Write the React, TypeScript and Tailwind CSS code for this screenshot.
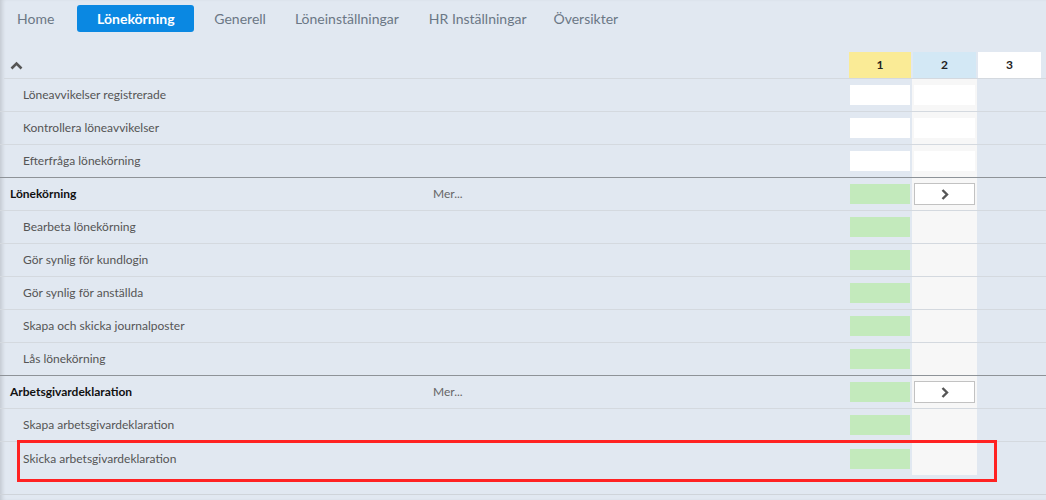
import React from "react";

type Row = {
  label: string;
  kind: "sub" | "section";
  col1: "white" | "green";
  col2: "white" | "button" | "none";
  dark?: boolean;
};

const rows: Row[] = [
  { label: "Löneavvikelser registrerade", kind: "sub", col1: "white", col2: "white" },
  { label: "Kontrollera löneavvikelser", kind: "sub", col1: "white", col2: "white" },
  { label: "Efterfråga lönekörning", kind: "sub", col1: "white", col2: "white", dark: true },
  { label: "Lönekörning", kind: "section", col1: "green", col2: "button" },
  { label: "Bearbeta lönekörning", kind: "sub", col1: "green", col2: "none" },
  { label: "Gör synlig för kundlogin", kind: "sub", col1: "green", col2: "none" },
  { label: "Gör synlig för anställda", kind: "sub", col1: "green", col2: "none" },
  { label: "Skapa och skicka journalposter", kind: "sub", col1: "green", col2: "none" },
  { label: "Lås lönekörning", kind: "sub", col1: "green", col2: "none", dark: true },
  { label: "Arbetsgivardeklaration", kind: "section", col1: "green", col2: "button" },
  { label: "Skapa arbetsgivardeklaration", kind: "sub", col1: "green", col2: "none" },
  { label: "Skicka arbetsgivardeklaration", kind: "sub", col1: "green", col2: "none" },
];

const ChevronRight = () => (
  <svg width="8" height="11" viewBox="0 0 8 11" fill="none">
    <polyline points="1.5,1 6,5.5 1.5,10" stroke="#555" strokeWidth="2.4" />
  </svg>
);

export default function App() {
  return (
    <div
      className="relative w-[1046px] h-[500px] overflow-hidden bg-[#e1e8f1] text-[13px] shadow-[inset_4px_0_4px_-2px_rgba(0,0,0,0.14)]"
      style={{ fontFamily: "Lato, 'Open Sans', sans-serif" }}
    >
      {/* tabs */}
      <div className="flex items-center h-[27px] mt-[5px] pl-[17px] text-[14px] text-[#6b7785]">
        <div className="mr-[23px]">Home</div>
        <div className="h-[27px] w-[117px] mr-[20px] flex items-center justify-center rounded-[3px] bg-[#0a88e2] text-white font-bold">
          Lönekörning
        </div>
        <div className="mr-[29px]">Generell</div>
        <div className="mr-[30px]">Löneinställningar</div>
        <div className="mr-[27px]">HR Inställningar</div>
        <div>Översikter</div>
      </div>

      {/* header */}
      <div className="flex h-[27px] mt-[20px] ml-[4px] border-b border-[#d4d9df]">
        <div className="w-[845px] flex items-center pl-[6px]">
          <svg width="13" height="9" viewBox="0 0 13 9" fill="none">
            <polyline points="1.5,7.5 6.5,2.5 11.5,7.5" stroke="#555" strokeWidth="2.6" />
          </svg>
        </div>
        <div className="w-[62px] h-[26px] bg-[#faeb96] flex items-center justify-center text-[12px] font-bold text-[#222]">1</div>
        <div className="w-[63px] h-[26px] ml-[2px] bg-[#d3e8f5] flex items-center justify-center text-[12px] font-bold text-[#222]">2</div>
        <div className="w-[63px] h-[26px] ml-[2px] bg-white flex items-center justify-center text-[12px] font-bold text-[#222]">3</div>
      </div>

      {/* rows */}
      {rows.map((r, i) => {
        const last = i === rows.length - 1;
        return (
          <div
            key={r.label}
            className={
              "flex h-[33px] " +
              (last ? "" : r.dark ? "border-b border-[#8e9398]" : "border-b border-[#d4d9df]")
            }
          >
            <div className="w-[849px] flex items-center">
              {r.kind === "section" ? (
                <>
                  <span className="w-[433px] pl-[10px] font-bold text-[12px] text-[#111]">{r.label}</span>
                  <span className="text-[12px] text-[#666]">Mer...</span>
                </>
              ) : (
                <span className="pl-[23px] text-[12px] text-[#555]">{r.label}</span>
              )}
            </div>
            <div className="w-[63px] flex items-center pl-[1px]">
              <div className={"w-[60px] h-[20px] " + (r.col1 === "white" ? "bg-white" : "bg-[#c3eabc]")} />
            </div>
            <div className="w-[65px] bg-[#f7f7f7] flex items-center pl-[2px]">
              {r.col2 === "white" && <div className="w-[61px] h-[20px] bg-white" />}
              {r.col2 === "button" && (
                <div className="w-[61px] h-[22px] bg-white border border-[#c2c2c2] flex items-center justify-center">
                  <ChevronRight />
                </div>
              )}
            </div>
          </div>
        );
      })}

      <div className="h-[20px] border-b border-[#cfd4da]" />

      {/* highlight annotation */}
      <div className="absolute left-[17px] top-[440px] w-[980px] h-[42px] border-[3px] border-[#ff2222]" />
    </div>
  );
}
